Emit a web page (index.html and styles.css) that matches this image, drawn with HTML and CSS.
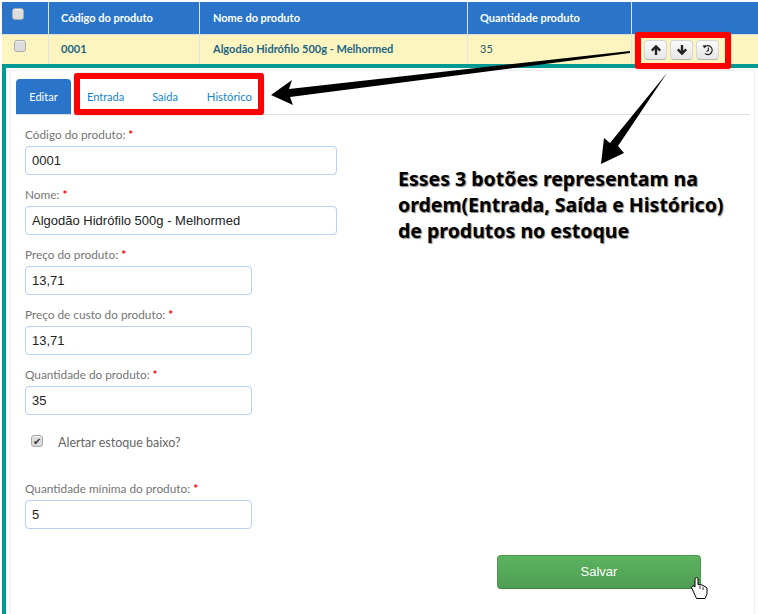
FILE: index.html
```html
<!DOCTYPE html>
<html lang="pt">
<head>
<meta charset="utf-8">
<title>Produtos</title>
<link rel="stylesheet" href="styles.css">
</head>
<body>
<div class="page">
  <div class="row head">
    <div class="cell c1"><span class="check"></span></div>
    <div class="cell c2">Código do produto</div>
    <div class="cell c3">Nome do produto</div>
    <div class="cell c4">Quantidade produto</div>
    <div class="cell c5"></div>
  </div>
  <div class="row item">
    <div class="cell c1"><span class="check"></span></div>
    <div class="cell c2">0001</div>
    <div class="cell c3">Algodão Hidrófilo 500g - Melhormed</div>
    <div class="cell c4 qty">35</div>
    <div class="cell c5 actions">
      <button class="icon-btn" type="button" aria-label="Entrada">
        <svg viewBox="0 0 12 12" width="12" height="12"><path d="M6 .8 1 5.800 2.600 7.400 4.800 5.200V11h2.400V5.200L9.400 7.400 11 5.800z" fill="#222"/></svg>
      </button>
      <button class="icon-btn" type="button" aria-label="Saída">
        <svg viewBox="0 0 12 12" width="12" height="12"><path d="M6 11.200 1 6.200 2.600 4.600 4.800 6.800V1h2.400v5.800L9.400 4.600 11 6.200z" fill="#222"/></svg>
      </button>
      <button class="icon-btn" type="button" aria-label="Histórico">
        <svg viewBox="0 0 12 12" width="12" height="12"><path d="M2.600 3A4.400 4.400 0 1 1 3 9.600" fill="none" stroke="#222" stroke-width="1.300"/><path d="M.6 1.400 4.400 1.200 2.400 4.600z" fill="#222"/><path d="M6.300 3.400V6.400L4.600 7.600" fill="none" stroke="#222" stroke-width="1.200"/></svg>
      </button>
    </div>
  </div>

  <div class="detail">
    <div class="panel">
      <div class="tabs">
        <a class="tab active">Editar</a>
        <a class="tab t-entrada">Entrada</a>
        <a class="tab t-saida">Saída</a>
        <a class="tab t-hist">Histórico</a>
      </div>
      <form class="form">
        <div class="field"><label>Código do produto: <b>*</b></label><input class="wide" value="0001"></div>
        <div class="field"><label>Nome: <b>*</b></label><input class="wide" value="Algodão Hidrófilo 500g - Melhormed"></div>
        <div class="field"><label>Preço do produto: <b>*</b></label><input class="narrow" value="13,71"></div>
        <div class="field"><label>Preço de custo do produto: <b>*</b></label><input class="narrow" value="13,71"></div>
        <div class="field"><label>Quantidade do produto: <b>*</b></label><input class="narrow" value="35"></div>
        <div class="alert"><span class="check checked">✔</span><span class="alert-text">Alertar estoque baixo?</span></div>
        <div class="field"><label>Quantidade mínima do produto: <b>*</b></label><input class="narrow" value="5"></div>
        <div class="actions-bar"><button class="save" type="button">Salvar</button></div>
      </form>
    </div>
  </div>
</div>

<div class="mark mark-tabs"></div>
<div class="mark mark-btns"></div>
<svg class="arrows" viewBox="0 0 758 614" width="758" height="614">
  <polygon points="630,51 630,53 290,97 293,105 271,95 292,80 289,89" fill="#000"/>
  <polygon points="667,73 618,146 624,153 601,164 604,138 610,143" fill="#000"/>
  <path d="M696.500 598.500 691.500 587.500 693 585.500 695 587 695 578.500 696.500 577.500 698 578.500 698 584.500 702 585 705 586.500 707 588 707 594 705 598.500z" fill="#fff" stroke="#000" stroke-width="1"/>
  <path d="M700 586v3M703 587v3" stroke="#000" stroke-width=".8" fill="none"/>
</svg>
<p class="note">Esses 3 botões representam na<br>ordem(Entrada, Saída e Histórico)<br>de produtos no estoque</p>
</body>
</html>
```
FILE: styles.css
```css
* { box-sizing: border-box; }
html, body { margin: 0; padding: 0; background: #fff; }
body { width: 758px; height: 614px; overflow: hidden; position: relative; font-family: Lato, "Liberation Sans", sans-serif; }
.page { padding: 2px 0 0 2px; }

.row { display: flex; }
.cell { display: flex; align-items: center; padding: 0 0 2px 12px; font-size: 11px; border-right: 1px solid #dfe3e6; }
.c1 { width: 47px; padding-left: 10px; }
.c2 { width: 151px; }
.c3 { width: 268px; padding-left: 13px; }
.c4 { width: 164px; }
.c5 { flex: 1; border-right: 0; }

.head { height: 33px; background: #2a75c9; color: #fff; font-weight: 700; border-bottom: 1px solid #d8dde0; }
.head .c1 { align-items: flex-start; padding-top: 6px; }
.item { height: 29px; background: #fdf5c0; color: #1c6484; font-weight: 700; }
.item .c1 { padding-left: 12px; align-items: flex-start; padding-top: 5px; }
.item .qty { font-weight: 400; color: #2a5d66; }

.check { display: block; width: 12px; height: 12px; background: #dcdcdc; border: 1px solid #a9a9a9; border-radius: 3px; box-shadow: inset 0 1px 1px #f4f4f4; }
.checked { font-size: 10px; line-height: 10px; color: #333; text-align: center; }

.actions { padding-left: 12px; gap: 3px; align-items: flex-start; padding-top: 5px; }
.icon-btn { width: 23px; height: 20px; padding: 0; display: flex; align-items: center; justify-content: center; background: linear-gradient(#fbfbfb, #e6e6e6); border: 1px solid #d5d5d5; border-bottom-color: #b4b4b4; border-radius: 4px; }

.detail { border-top: 4px solid #009a94; border-left: 4px solid #009a94; padding: 2px 3px 0 4px; background: #fbfcfd; height: 560px; }
.panel { height: 100%; background: #fff; border: 1px solid #eceff3; padding: 8px 4px 0 5px; }

.tabs { display: flex; height: 36px; border-bottom: 1px solid #dde0e3; font-size: 11px; align-items: stretch; }
.tab { display: flex; align-items: center; color: #1484c8; }
.tab.active { width: 55px; justify-content: center; background: #2a75c9; color: #fff; border-radius: 4px 4px 0 0; }
.t-entrada { margin-left: 16px; }
.t-saida { margin-left: 28px; }
.t-hist { margin-left: 29px; font-size: 11.300px; }

.form { padding: 12px 0 0 9px; }
.field { height: 60px; }
.field label { display: block; height: 19px; line-height: 15px; font-size: 11.800px; color: #757575; }
.field b { color: #e00; font-weight: 700; }
.field input { display: block; height: 29px; padding: 0 6px; font: 13px "Liberation Sans", Arial, sans-serif; color: #222; background: #fff; border: 1px solid #b5cff5; border-radius: 4px; }
.wide { width: 312px; }
.narrow { width: 227px; }

.alert { display: flex; height: 54px; padding: 8px 0 0 6px; font-size: 12.500px; color: #666; }
.alert-text { margin-left: 15px; }

.actions-bar { padding: 14px 0 0 472px; }
.save { width: 204px; height: 34px; padding-bottom: 3px; font: 13px "Liberation Sans", Arial, sans-serif; color: #fff; background: linear-gradient(#5cb360, #4f9d52); border: 1px solid #4a984e; border-bottom-color: #3f7f42; border-radius: 4px; }

.mark { position: absolute; border: 6px solid #f00; border-radius: 3px; box-shadow: 0 0 1px #555; }
.mark-tabs { left: 74px; top: 73px; width: 190px; height: 42px; }
.mark-btns { left: 635px; top: 32px; width: 96px; height: 37px; }
.arrows { position: absolute; left: 0; top: 0; pointer-events: none; }
.note { position: absolute; left: 398px; top: 166px; margin: 0; font: 700 19.500px/26px "Noto Sans", "Open Sans", sans-serif; color: #000; text-shadow: 1px 1px 1px #888, 0 0 2px #fff; white-space: nowrap; }
```
